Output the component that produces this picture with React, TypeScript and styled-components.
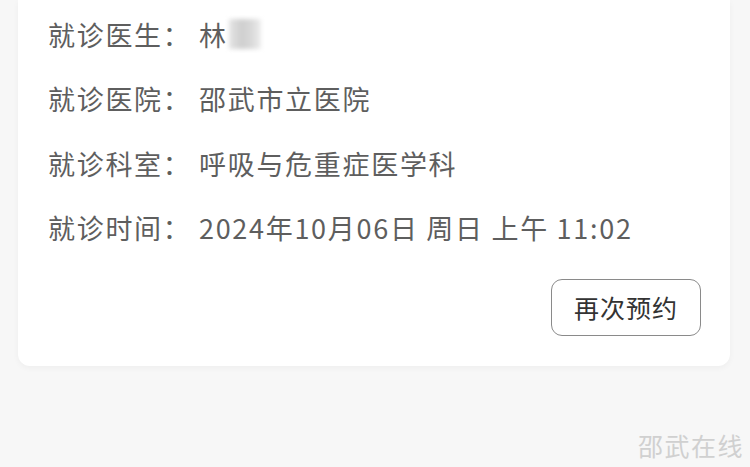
import React from "react";
import styled, {createGlobalStyle} from "styled-components";

const GlobalStyle = createGlobalStyle`
    html, body{
        margin: 0;
        padding: 0;
        background: #f7f7f7;
    }
    body{
        font-family: "Noto Sans CJK SC", "Noto Sans", sans-serif;
        width: 750px;
        height: 467px;
        overflow: hidden;
    }
`

const Page = styled.div`
    position: relative;
    height: 467px;
    background: #f7f7f7;
`

const Card = styled.div`
    margin: 0 20px 0 18px;
    padding: 14px 29px 30px 30px;
    background: #ffffff;
    border-radius: 0 0 12px 12px;
    box-shadow: 0 2px 6px rgba(0, 0, 0, 0.04);
    display: flex;
    flex-direction: column;
`

const Rows = styled.div`
    display: flex;
    flex-direction: column;
    gap: 24.5px;
`

const Row = styled.div`
    display: flex;
    align-items: center;
    height: 40px;
    font-size: 27px;
    letter-spacing: 1.7px;
    color: #5e5e5e;
    white-space: nowrap;
`

const Label = styled.span`
    width: 151px;
    flex: none;
`

const Value = styled.span`
    display: inline-flex;
    align-items: center;
`

const Masked = styled.span`
    display: inline-block;
    width: 32px;
    height: 30px;
    margin-left: 1px;
    background: linear-gradient(90deg, #e4e4e4 0%, #cfcfcf 40%, #d9d9d9 70%, #eeeeee 100%);
    filter: blur(2px);
`

const Actions = styled.div`
    display: flex;
    justify-content: flex-end;
    margin-top: 31px;
`

const Button = styled.button`
    width: 150px;
    height: 57px;
    border: 1.5px solid #8a8a8a;
    border-radius: 11px;
    background: #ffffff;
    color: #333333;
    font-family: "Noto Sans CJK SC", sans-serif;
    font-size: 25px;
    letter-spacing: 1px;
    padding: 0;
`

const Watermark = styled.div`
    position: absolute;
    right: 6px;
    bottom: 4px;
    font-size: 25px;
    letter-spacing: 1.5px;
    color: #d0d0d0;
`

const info = [
    {label: "就诊医生：", value: "林", masked: true},
    {label: "就诊医院：", value: "邵武市立医院"},
    {label: "就诊科室：", value: "呼吸与危重症医学科"},
    {label: "就诊时间：", value: "2024年10月06日 周日 上午 11:02"},
];

const App = ()=>{
    return (
        <>
            <GlobalStyle/>
            <Page>
                <Card>
                    <Rows>
                        {info.map((item)=>(
                            <Row key={item.label}>
                                <Label>{item.label}</Label>
                                <Value>
                                    {item.value}
                                    {item.masked && <Masked/>}
                                </Value>
                            </Row>
                        ))}
                    </Rows>
                    <Actions>
                        <Button>再次预约</Button>
                    </Actions>
                </Card>
                <Watermark>邵武在线</Watermark>
            </Page>
        </>
    )
}

export default App;
